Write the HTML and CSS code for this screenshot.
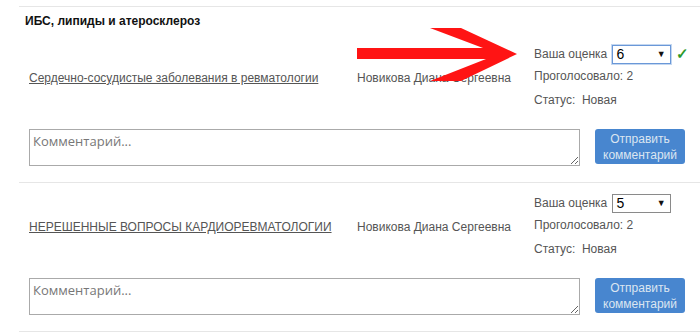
FILE: index.html
```html
<!DOCTYPE html>
<html lang="ru">
<head>
<meta charset="utf-8">
<link rel="stylesheet" href="styles.css">
</head>
<body>
<div class="list">
  <div class="group-title">ИБС, липиды и атеросклероз</div>

  <div class="item">
    <div class="row">
      <a class="title" href="#">Сердечно-сосудистые заболевания в ревматологии</a>
      <span class="author">Новикова Диана Сергеевна</span>
      <div class="meta">
        <div class="meta-line">Ваша оценка <span class="select focused"><span class="val">6</span><span class="caret">▼</span></span><span class="ok">✓</span></div>
        <div class="meta-line">Проголосовало: 2</div>
        <div class="meta-line">Статус:&nbsp; Новая</div>
      </div>
    </div>
    <div class="comment-row">
      <textarea class="comment" placeholder="Комментарий..."></textarea>
      <button class="send">Отправить<br>комментарий</button>
    </div>
  </div>

  <div class="item">
    <div class="row">
      <a class="title" href="#">НЕРЕШЕННЫЕ ВОПРОСЫ КАРДИОРЕВМАТОЛОГИИ</a>
      <span class="author">Новикова Диана Сергеевна</span>
      <div class="meta">
        <div class="meta-line">Ваша оценка <span class="select"><span class="val">5</span><span class="caret">▼</span></span></div>
        <div class="meta-line">Проголосовало: 2</div>
        <div class="meta-line">Статус:&nbsp; Новая</div>
      </div>
    </div>
    <div class="comment-row">
      <textarea class="comment" placeholder="Комментарий..."></textarea>
      <button class="send">Отправить<br>комментарий</button>
    </div>
  </div>

  <svg class="arrow" width="170" height="60" viewBox="350 25 170 60">
    <polygon points="357,48 483,48 430,28 461,28 517,54 461,81 430,81 486,59 357,59" fill="#ff1414"/>
  </svg>
</div>
</body>
</html>
```

FILE: styles.css
```css
html, body {
  margin: 0;
  padding: 0;
  background: #fff;
}

body {
  font-family: "Liberation Sans", Arial, sans-serif;
  font-size: 12px;
  color: #555;
}

.list {
  position: relative;
  margin: 6px 0 0 19px;
  border-top: 1px solid #e6e6e6;
}

.group-title {
  padding: 6px 6px 5px;
  line-height: 16px;
  font-weight: bold;
  color: #111;
}

.item {
  padding: 10px 15px 16px 10px;
  border-bottom: 1px solid #e6e6e6;
}

.row {
  display: grid;
  grid-template-columns: 328px 177px 1fr;
  align-items: center;
}

.title {
  color: #555;
  text-decoration: underline;
}

.author {
  color: #555;
}

.meta {
  display: flex;
  flex-direction: column;
  white-space: nowrap;
}

.meta-line {
  display: flex;
  align-items: center;
  height: 24px;
  white-space: pre;
}

.meta-line:first-child {
  height: 20px;
}

.select {
  display: inline-flex;
  align-items: center;
  justify-content: space-between;
  box-sizing: border-box;
  flex: none;
  width: 59px;
  height: 19px;
  margin-left: 1px;
  padding: 0 4px 0 4px;
  border: 1px solid #8a8a8a;
  color: #000;
  font-size: 14px;
  background: #fff;
}

.select.focused {
  border-color: #6a98d8;
  box-shadow: 0 0 0 1px #c4d7f0;
}

.caret {
  font-size: 9px;
  color: #111;
}

.ok {
  margin-left: 5px;
  color: #2c9a2c;
  font-size: 15px;
  font-weight: bold;
}

.comment-row {
  display: flex;
  align-items: flex-start;
  gap: 15px;
  margin-top: 17px;
}

.comment {
  box-sizing: border-box;
  width: 551px;
  height: 37px;
  margin: 0;
  padding: 2px 3px;
  border: 1px solid #aaa;
  font-family: "Open Sans", sans-serif;
  font-size: 13px;
  resize: vertical;
}

.comment::placeholder {
  color: #777;
}

.send {
  box-sizing: border-box;
  width: 90px;
  height: 35px;
  margin: 0;
  padding: 1px 0 0;
  border: 0;
  border-radius: 3px;
  background: #4886cf;
  color: #dbe5f1;
  font-family: "Liberation Sans", Arial, sans-serif;
  font-size: 12px;
  line-height: 16px;
}

.arrow {
  position: absolute;
  left: 331px;
  top: 18px;
}
```
